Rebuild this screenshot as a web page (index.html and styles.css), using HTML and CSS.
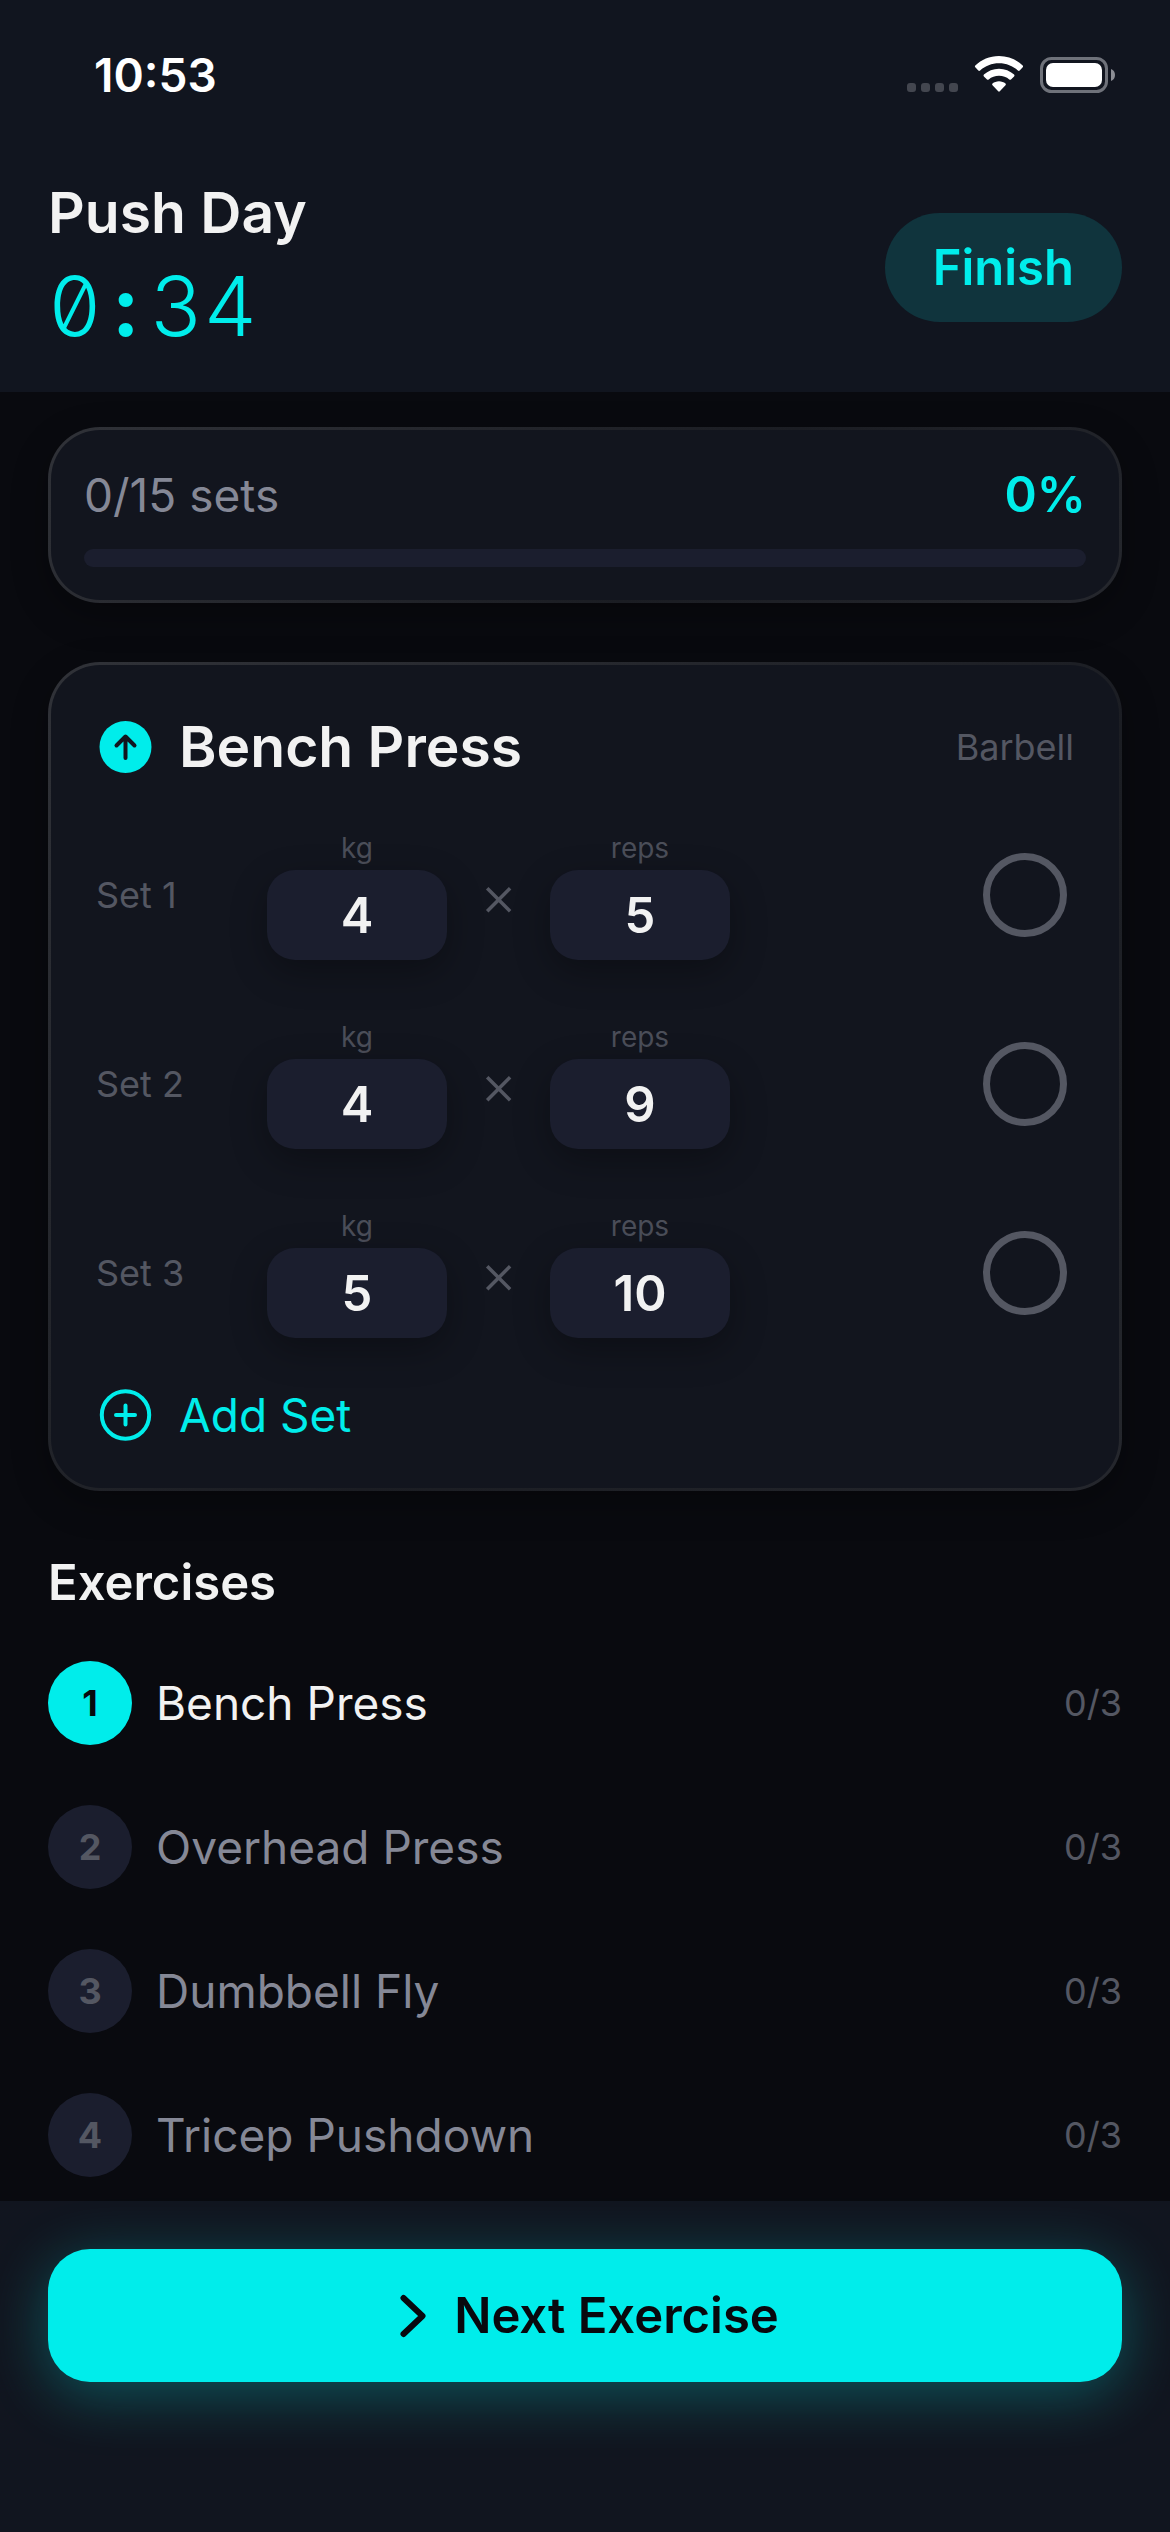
FILE: index.html
```html
<!DOCTYPE html>
<html lang="en">
<head>
    <meta charset="UTF-8">
    <meta name="viewport" content="width=device-width, initial-scale=1.0">
    <title>Push Day</title>
    <link rel="stylesheet" href="styles.css">
</head>
<body>
    <header class="header">
        <div class="status-bar">
            <span class="clock">10:53</span>
            <svg class="status-icons" width="208" height="38" viewBox="0 0 208 38" aria-hidden="true">
                <g fill="#43464f">
                    <rect x="0" y="27" width="9" height="9" rx="3"/>
                    <rect x="14" y="27" width="9" height="9" rx="3"/>
                    <rect x="28" y="27" width="9" height="9" rx="3"/>
                    <rect x="42" y="27" width="9" height="9" rx="3"/>
                </g>
                <!-- wifi -->
                <g fill="#fff">
                    <path d="M92 0C82.500 0 74.500 3.600 68.300 9.600Q67.500 10.500 68.300 11.300L71.300 14.400Q72.200 15.300 73.100 14.500C78.200 9.900 84.700 7.300 92 7.300S105.800 9.900 110.900 14.500Q111.800 15.300 112.700 14.400L115.700 11.300Q116.500 10.500 115.700 9.600C109.500 3.600 101.500 0 92 0Z"/>
                    <path d="M92 12.700C86.200 12.700 80.900 14.900 76.900 18.600Q76 19.500 76.900 20.400L80 23.400Q80.800 24.200 81.700 23.400C84.500 21 88.100 19.700 92 19.700S99.500 21 102.300 23.400Q103.200 24.200 104 23.400L107.100 20.400Q108 19.500 107.100 18.600C103.100 14.900 97.800 12.700 92 12.700Z"/>
                    <path d="M92 25.300C89.500 25.300 87.200 26.200 85.500 27.600Q84.600 28.400 85.500 29.300L91.200 35.300Q92 36.100 92.800 35.300L98.500 29.300Q99.400 28.400 98.500 27.600C96.800 26.200 94.500 25.300 92 25.300Z"/>
                </g>
                <!-- battery -->
                <rect x="134.500" y="2.500" width="65" height="33" rx="10" fill="none" stroke="#6f727a" stroke-width="3"/>
                <rect x="139" y="7" width="56" height="24" rx="7" fill="#fff"/>
                <path d="M204 13q4 1.500 4 6t-4 6z" fill="#8b8d94"/>
            </svg>
        </div>
        <div class="title-row">
            <div>
                <h1>Push Day</h1>
                <div class="timer">0<span class="colon">:</span>34</div>
            </div>
            <button class="btn-finish" type="button">Finish</button>
        </div>
    </header>

    <main class="content">
        <section class="card progress-card">
            <div class="progress-text">
                <label for="setProgress">0/15 sets</label>
                <span class="percent">0%</span>
            </div>
            <progress id="setProgress" value="0" max="15"></progress>
        </section>

        <section class="card exercise-card">
            <div class="exercise-head">
                <svg class="icon" width="59" height="52" viewBox="0 0 59 52" aria-hidden="true">
                    <circle cx="29.500" cy="26" r="26" fill="#00edeb"/>
                    <path d="M29.500 37V16M20.500 24.500l9-9 9 9" fill="none" stroke="#11151e" stroke-width="4" stroke-linecap="round" stroke-linejoin="round"/>
                </svg>
                <h2>Bench Press</h2>
                <span class="equipment">Barbell</span>
            </div>

            <div class="sets">
                <div class="set-row">
                    <span class="set-name">Set 1</span>
                    <div class="field">
                        <label for="kg1">kg</label>
                        <input type="text" inputmode="decimal" id="kg1" value="4">
                    </div>
                    <span class="times">×</span>
                    <div class="field">
                        <label for="reps1">reps</label>
                        <input type="text" inputmode="numeric" id="reps1" value="5">
                    </div>
                    <input class="done" type="checkbox" aria-label="Set 1 done">
                </div>
                <div class="set-row">
                    <span class="set-name">Set 2</span>
                    <div class="field">
                        <label for="kg2">kg</label>
                        <input type="text" inputmode="decimal" id="kg2" value="4">
                    </div>
                    <span class="times">×</span>
                    <div class="field">
                        <label for="reps2">reps</label>
                        <input type="text" inputmode="numeric" id="reps2" value="9">
                    </div>
                    <input class="done" type="checkbox" aria-label="Set 2 done">
                </div>
                <div class="set-row">
                    <span class="set-name">Set 3</span>
                    <div class="field">
                        <label for="kg3">kg</label>
                        <input type="text" inputmode="decimal" id="kg3" value="5">
                    </div>
                    <span class="times">×</span>
                    <div class="field">
                        <label for="reps3">reps</label>
                        <input type="text" inputmode="numeric" id="reps3" value="10">
                    </div>
                    <input class="done" type="checkbox" aria-label="Set 3 done">
                </div>
            </div>

            <button class="btn-add" type="button">
                <svg class="icon" width="59" height="52" viewBox="0 0 59 52" aria-hidden="true">
                    <g fill="none" stroke="#00edeb" stroke-width="4" stroke-linecap="round">
                        <circle cx="29.500" cy="26" r="23.700"/>
                        <path d="M29.500 16.500v19M20 26h19"/>
                    </g>
                </svg>
                Add Set
            </button>
        </section>

        <h3>Exercises</h3>
        <ol class="exercise-list">
            <li class="current"><span class="number">1</span><span class="name">Bench Press</span><span class="count">0/3</span></li>
            <li><span class="number">2</span><span class="name">Overhead Press</span><span class="count">0/3</span></li>
            <li><span class="number">3</span><span class="name">Dumbbell Fly</span><span class="count">0/3</span></li>
            <li><span class="number">4</span><span class="name">Tricep Pushdown</span><span class="count">0/3</span></li>
        </ol>
    </main>

    <footer class="footer">
        <button class="btn-next" type="button">
            <svg width="36" height="44" viewBox="0 0 36 44" aria-hidden="true">
                <path d="M12.500 4l19 18-19 18" fill="none" stroke="#08090e" stroke-width="6" stroke-linecap="round" stroke-linejoin="round"/>
            </svg>
            Next Exercise
        </button>
    </footer>
</body>
</html>
```
FILE: styles.css
```css
* {
    box-sizing: border-box;
}
body {
    margin: 0;
    min-height: 100vh;
    display: flex;
    flex-direction: column;
    background-color: #090a0f;
    color: #f2f2f2;
    font-family: Inter, "Liberation Sans", sans-serif;
    font-size: 46px;
}
h1, h2, h3 {
    margin: 0;
    font-weight: 600;
}
button, input {
    font-family: inherit;
    border: none;
    padding: 0;
    margin: 0;
}
button {
    cursor: pointer;
}

/* header */
.header {
    background-color: #11151f;
    padding: 0 48px 32px;
}
.status-bar {
    display: flex;
    justify-content: space-between;
    align-items: center;
    height: 150px;
    margin-bottom: 24px;
    padding: 0 7px 0 46px;
}
.clock {
    color: #fff;
    font-size: 46px;
    font-weight: 600;
}
.title-row {
    display: flex;
    justify-content: space-between;
    align-items: center;
}
h1 {
    font-size: 57px;
    line-height: 78px;
}
.timer {
    color: #00edeb;
    font-size: 83px;
    font-weight: 300;
    line-height: 108px;
    font-feature-settings: "tnum", "zero";
}
/* about as wide as a digit */
.colon {
    display: inline-block;
    width: 48px;
    font-weight: 700;
    text-align: center;
}
.btn-finish {
    height: 109px;
    padding: 0 48px;
    border-radius: 55px;
    background-color: #10343d;
    color: #00edeb;
    font-size: 49px;
    font-weight: 600;
}

/* cards */
.content {
    flex: 1;
    padding: 35px 48px 24px;
}
.card {
    border: 3px solid transparent;
    border-radius: 52px;
    background: linear-gradient(#12151e, #12151e) padding-box,
                linear-gradient(135deg, #303238, #1b1d23 60%, #25272d) border-box;
    box-shadow: 0 12px 36px rgba(0, 0, 0, 0.3);
}
.progress-card {
    padding: 33px;
    margin-bottom: 59px;
}
.progress-text {
    display: flex;
    justify-content: space-between;
    line-height: 64px;
    margin-bottom: 22px;
    color: #858896;
}
.percent {
    color: #00edeb;
    font-size: 49px;
    font-weight: 600;
}
progress {
    display: block;
    width: 100%;
    height: 18px;
    appearance: none;
    border: none;
    border-radius: 9px;
    background-color: #1b1e2e;
    overflow: hidden;
}
progress::-webkit-progress-bar {
    background-color: #1b1e2e;
}
progress::-webkit-progress-value {
    background-color: #00edeb;
}
.exercise-card {
    padding: 45px;
}
.exercise-head {
    display: flex;
    align-items: center;
    gap: 24px;
    margin-bottom: 46px;
}
h2 {
    flex: 1;
    font-size: 57px;
    line-height: 74px;
}
.equipment, .set-name {
    color: #545762;
    font-size: 36px;
}

/* sets */
.sets {
    display: flex;
    flex-direction: column;
    gap: 59px;
}
.set-row {
    display: grid;
    grid-template-columns: 171px 180px 103px 180px 1fr;
    align-items: center;
}
.field {
    display: flex;
    flex-direction: column;
    text-align: center;
}
.field label {
    margin-bottom: 4px;
    color: #4b4e59;
    font-size: 28px;
    line-height: 36px;
}
.field input {
    width: 100%;
    height: 90px;
    border-radius: 28px;
    background-color: #1b1e2e;
    box-shadow: 0 12px 36px rgba(0, 0, 0, 0.3);
    color: #f2f2f2;
    font-size: 49px;
    font-weight: 600;
    text-align: center;
}
.times {
    color: #545762;
    font-size: 57px;
    font-weight: 300;
    text-align: center;
}
.done {
    appearance: none;
    justify-self: end;
    width: 84px;
    height: 84px;
    margin-right: 7px;
    border: 7px solid #545762;
    border-radius: 50%;
}
.done:checked {
    border-color: #00edeb;
    background-color: #00edeb;
}
.btn-add {
    display: flex;
    align-items: center;
    gap: 24px;
    margin-top: 49px;
    background: none;
    color: #00edeb;
    font-size: 46px;
    line-height: 56px;
}

/* exercise list */
h3 {
    margin: 62px 0 48px;
    font-size: 49px;
    line-height: 60px;
}
.exercise-list {
    display: flex;
    flex-direction: column;
    gap: 60px;
    margin: 0;
    padding: 0;
    list-style: none;
}
.exercise-list li {
    display: flex;
    align-items: center;
    gap: 24px;
    color: #858896;
}
.number {
    width: 84px;
    border-radius: 50%;
    background-color: #1b1e2e;
    color: #545762;
    font-size: 36px;
    font-weight: 700;
    line-height: 84px;
    text-align: center;
}
.name {
    flex: 1;
}
.count {
    color: #545762;
    font-size: 36px;
}
.current .number {
    background-color: #00edeb;
    color: #08090e;
}
.current .name {
    color: #f2f2f2;
}

/* bottom bar */
.footer {
    padding: 48px 48px 150px;
    background-color: #11151f;
}
.btn-next {
    display: flex;
    justify-content: center;
    align-items: center;
    gap: 27px;
    width: 100%;
    height: 133px;
    border-radius: 42px;
    background-color: #00edeb;
    box-shadow: 0 12px 60px rgba(0, 237, 235, 0.3);
    color: #08090e;
    font-size: 49px;
    font-weight: 600;
}
```
